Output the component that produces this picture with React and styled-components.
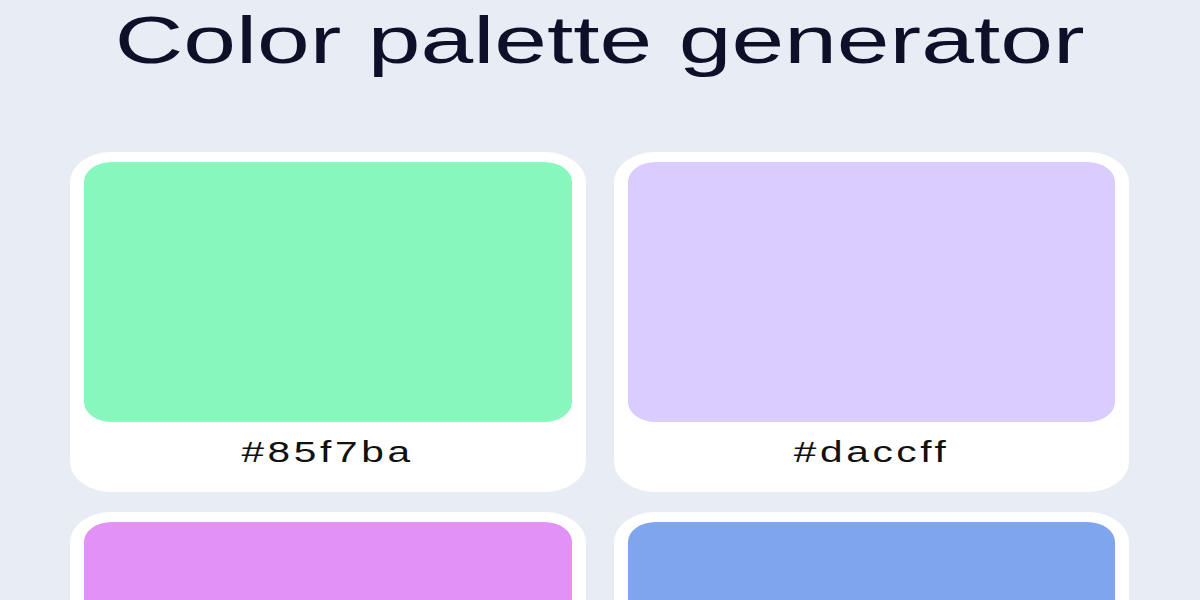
import React from "react";
import styled, { createGlobalStyle } from "styled-components";

const Global = createGlobalStyle`
  html, body { margin: 0; padding: 0; background: #e8ecf4; }
  body { font-family: "Liberation Sans", Arial, sans-serif; }
`;

const Page = styled.main`
  padding: 6px 71px 40px 70px;
`;

const Title = styled.h1`
  margin: 0 0 79px;
  height: 67px;
  font-size: 67px;
  line-height: 1;
  font-weight: 400;
  color: #0c1129;
  text-align: center;
`;

const Stretch = styled.span`
  display: inline-block;
  transform: scaleX(${(p) => p.$sx || 1.4});
  transform-origin: center;
  white-space: nowrap;
`;

const Grid = styled.section`
  display: grid;
  grid-template-columns: 1fr 1fr;
  column-gap: 28px;
  row-gap: 20px;
`;

const Card = styled.article`
  background: #ffffff;
  border-radius: 42px / 30px;
  padding: 10px 14px;
`;

const Swatch = styled.div`
  height: 260px;
  border-radius: 28px / 20px;
  background: ${(p) => p.$color};
`;

const Label = styled.div`
  padding: 16px 0 15px;
  height: 29px;
  font-size: 29px;
  line-height: 1;
  letter-spacing: 2.6px;
  color: #111111;
  text-align: center;
`;

const colors = [
  { hex: "#85f7ba", fill: "#88f7bd" },
  { hex: "#daccff", fill: "#daccff" },
  { hex: "#e291f6", fill: "#e291f6" },
  { hex: "#7fa5ee", fill: "#7fa5ee" },
];

export default function App() {
  return (
    <>
      <Global />
      <Page>
        <Title>
          <Stretch $sx={1.415}>Color palette generator</Stretch>
        </Title>
        <Grid>
          {colors.map((c) => (
            <Card key={c.hex}>
              <Swatch $color={c.fill} />
              <Label>
                <Stretch>{c.hex}</Stretch>
              </Label>
            </Card>
          ))}
        </Grid>
      </Page>
    </>
  );
}
